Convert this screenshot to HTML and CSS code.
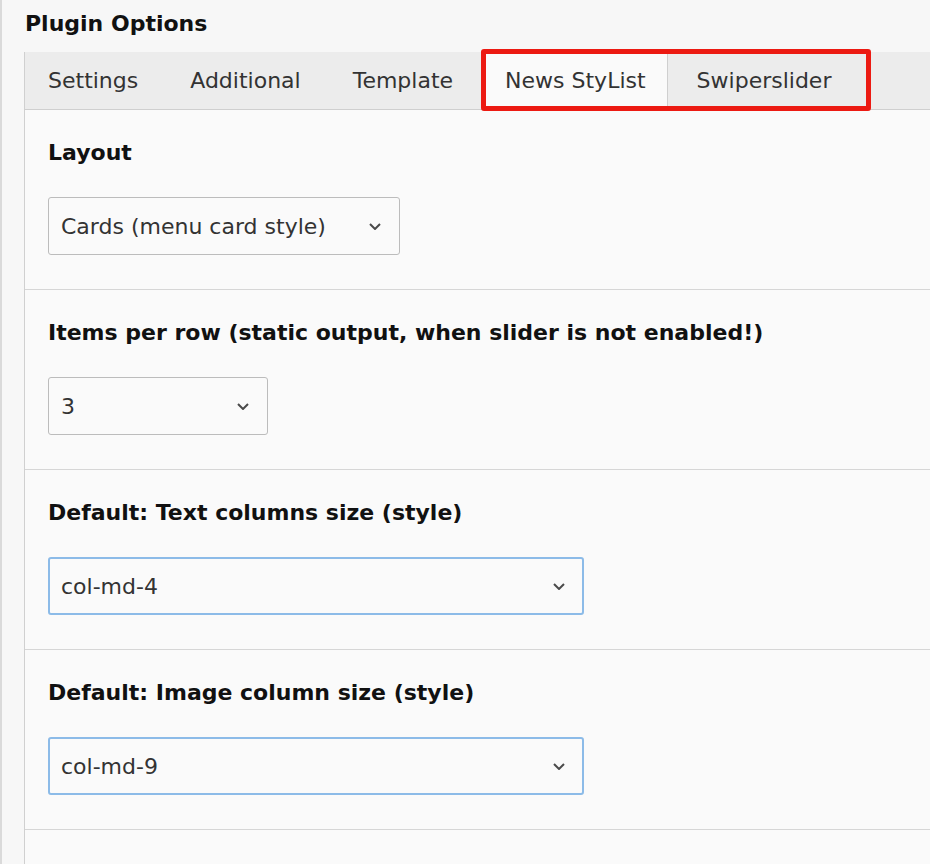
FILE: index.html
```html
<!DOCTYPE html>
<html lang="en">
<head>
    <meta charset="UTF-8">
    <meta name="viewport" content="width=device-width, initial-scale=1.0">
    <title>Plugin Options</title>
    <link rel="stylesheet" href="styles.css">
</head>
<body>
    <div class="page">
        <h1 class="title">Plugin Options</h1>
        <div class="panel">
            <nav class="tabs">
                <span class="tab">Settings</span>
                <span class="tab">Additional</span>
                <span class="tab">Template</span>
                <span class="tab active">News StyList</span>
                <span class="tab">Swiperslider</span>
                <span class="highlight"></span>
            </nav>

            <section class="field">
                <label class="field-label">Layout</label>
                <div class="select select-layout">
                    <span>Cards (menu card style)</span>
                    <svg class="chevron" width="12" height="7" viewBox="0 0 12 7"><path d="M1 1 L6 6 L11 1" /></svg>
                </div>
            </section>

            <section class="field">
                <label class="field-label">Items per row (static output, when slider is not enabled!)</label>
                <div class="select select-items">
                    <span>3</span>
                    <svg class="chevron" width="12" height="7" viewBox="0 0 12 7"><path d="M1 1 L6 6 L11 1" /></svg>
                </div>
            </section>

            <section class="field">
                <label class="field-label">Default: Text columns size (style)</label>
                <div class="select select-wide focus">
                    <span>col-md-4</span>
                    <svg class="chevron" width="12" height="7" viewBox="0 0 12 7"><path d="M1 1 L6 6 L11 1" /></svg>
                </div>
            </section>

            <section class="field">
                <label class="field-label">Default: Image column size (style)</label>
                <div class="select select-wide focus">
                    <span>col-md-9</span>
                    <svg class="chevron" width="12" height="7" viewBox="0 0 12 7"><path d="M1 1 L6 6 L11 1" /></svg>
                </div>
            </section>

            <section class="field"></section>
        </div>
    </div>
</body>
</html>
```

FILE: styles.css
```css
/* General */
body {
    font-family: 'DejaVu Sans', Verdana, sans-serif;
    font-size: 22px;
    margin: 0;
    padding: 0;
    background-color: #f7f7f7;
    color: #333;
}

.page {
    border-left: 2px solid #dadada;
    min-height: 864px;
    overflow: hidden;
}

.title {
    font-size: 22px;
    line-height: 26px;
    color: #111;
    margin: 11px 0 15px 23px;
}

/* Panel */
.panel {
    margin-left: 22px;
    border-left: 1px solid #d0d0d0;
    background-color: #fafafa;
}

.tabs {
    position: relative;
    display: flex;
    height: 57px;
    background-color: #ececec;
    border-bottom: 1px solid #cfcfcf;
}

.tab {
    display: flex;
    align-items: center;
    padding: 0 29px 0 23px;
    color: #333;
}

.tab.active {
    background-color: #fafafa;
    border-right: 1px solid #cfcfcf;
    padding-right: 21px;
}

.tab.active + .tab {
    padding-left: 29px;
}

/* Red annotation box */
.highlight {
    position: absolute;
    left: 456px;
    top: -3px;
    width: 380px;
    height: 52px;
    border: 5px solid #ec1a12;
    border-radius: 3px;
}

/* Fields */
.field {
    padding: 30px 23px 34px;
    border-bottom: 1px solid #d6d6d6;
}

.field-label {
    display: block;
    font-weight: bold;
    line-height: 26px;
    color: #111;
    margin-bottom: 31px;
}

.select {
    display: flex;
    align-items: center;
    justify-content: space-between;
    box-sizing: border-box;
    height: 58px;
    padding: 0 18px 0 12px;
    border: 1px solid #bcbcbc;
    border-radius: 3px;
    background-color: #fafafa;
    color: #333;
}

.select-layout {
    width: 352px;
}

.select-items {
    width: 220px;
}

.select-wide {
    width: 536px;
}

.select.focus {
    border: 2px solid #8cbbe8;
    padding: 0 17px 0 11px;
}

.chevron path {
    fill: none;
    stroke: #4a4a4a;
    stroke-width: 2;
}
```
